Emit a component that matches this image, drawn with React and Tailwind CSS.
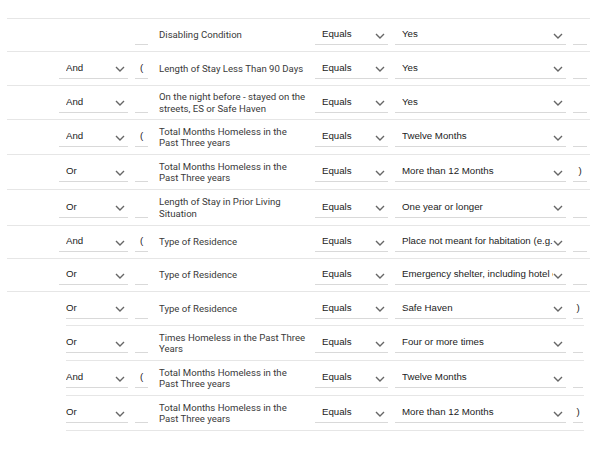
import React from "react";

const rows = [
  { op: "", open: "", desc: "Disabling Condition", val: "Yes", close: "", h: "h-[33px]" },
  { op: "And", open: "(", desc: "Length of Stay Less Than 90 Days", val: "Yes", close: "", h: "h-[34px]" },
  { op: "And", open: "", desc: "On the night before - stayed on the streets, ES or Safe Haven", val: "Yes", close: "", h: "h-[34px]" },
  { op: "And", open: "(", desc: "Total Months Homeless in the Past Three years", val: "Twelve Months", close: "", h: "h-[35px]" },
  { op: "Or", open: "", desc: "Total Months Homeless in the Past Three years", val: "More than 12 Months", close: ")", h: "h-[35px]" },
  { op: "Or", open: "", desc: "Length of Stay in Prior Living Situation", val: "One year or longer", close: "", h: "h-[36px]" },
  { op: "And", open: "(", desc: "Type of Residence", val: "Place not meant for habitation (e.g., a vehicle, an abandoned building)", close: "", h: "h-[33px]" },
  { op: "Or", open: "", desc: "Type of Residence", val: "Emergency shelter, including hotel or motel paid for with voucher", close: "", h: "h-[33px]" },
  { op: "Or", open: "", desc: "Type of Residence", val: "Safe Haven", close: ")", h: "h-[34px]", compact: true },
  { op: "Or", open: "", desc: "Times Homeless in the Past Three Years", val: "Four or more times", close: "", h: "h-[35px]", compact: true },
  { op: "And", open: "(", desc: "Total Months Homeless in the Past Three years", val: "Twelve Months", close: "", h: "h-[35px]", compact: true },
  { op: "Or", open: "", desc: "Total Months Homeless in the Past Three years", val: "More than 12 Months", close: ")", h: "h-[35px]", compact: true },
];

const Chevron = () => (
  <svg width="10" height="6" viewBox="0 0 10 6" className="shrink-0 mt-[2px]">
    <path d="M1 1 L5 5 L9 1" fill="none" stroke="#666" strokeWidth="1.4" />
  </svg>
);

const Select = ({ value, className }) => (
  <div className={"flex items-center h-[20px] border-b border-[#d9d9d9] pr-[3px] shrink-0 " + className}>
    <span className="flex-1 min-w-0 overflow-hidden whitespace-nowrap">{value}</span>
    <Chevron />
  </div>
);

const Paren = ({ value, className }) => (
  <div className={"h-[20px] border-b border-[#d9d9d9] shrink-0 flex items-center justify-center " + className}>
    {value}
  </div>
);

export default function App() {
  return (
    <div className="w-[602px] h-[449px] bg-white pt-[18px] text-[#222] text-[9.7px] font-['Liberation_Sans',Arial,sans-serif]">
      <div className="ml-[7px] w-[583px] border-t border-[#e6e6e6]">
        {rows.map((r, i) => (
          <div
            key={i}
            className={
              "flex items-center border-b border-[#e6e6e6] " +
              r.h +
              (r.compact ? " ml-[59px] mr-[6px]" : " pl-[52px]")
            }
          >
            {r.op ? (
              <Select value={r.op} className={r.compact ? "w-[62px]" : "w-[69px] pl-[7px]"} />
            ) : (
              <div className="w-[69px] shrink-0" />
            )}
            <Paren value={r.open} className="w-[13px] ml-[7px]" />
            <div className="w-[148px] ml-[11px] shrink-0 font-['Roboto',sans-serif] text-[9.6px] leading-[11.5px] text-[#3a3a3a]">
              {r.desc}
            </div>
            <Select value="Equals" className="w-[73px] ml-[8px] pl-[7px]" />
            <Select value={r.val} className="w-[171px] ml-[7px] pl-[7px]" />
            <Paren value={r.close} className={"ml-[7px] " + (r.compact ? "w-[10px]" : "w-[14px]")} />
          </div>
        ))}
      </div>
    </div>
  );
}
